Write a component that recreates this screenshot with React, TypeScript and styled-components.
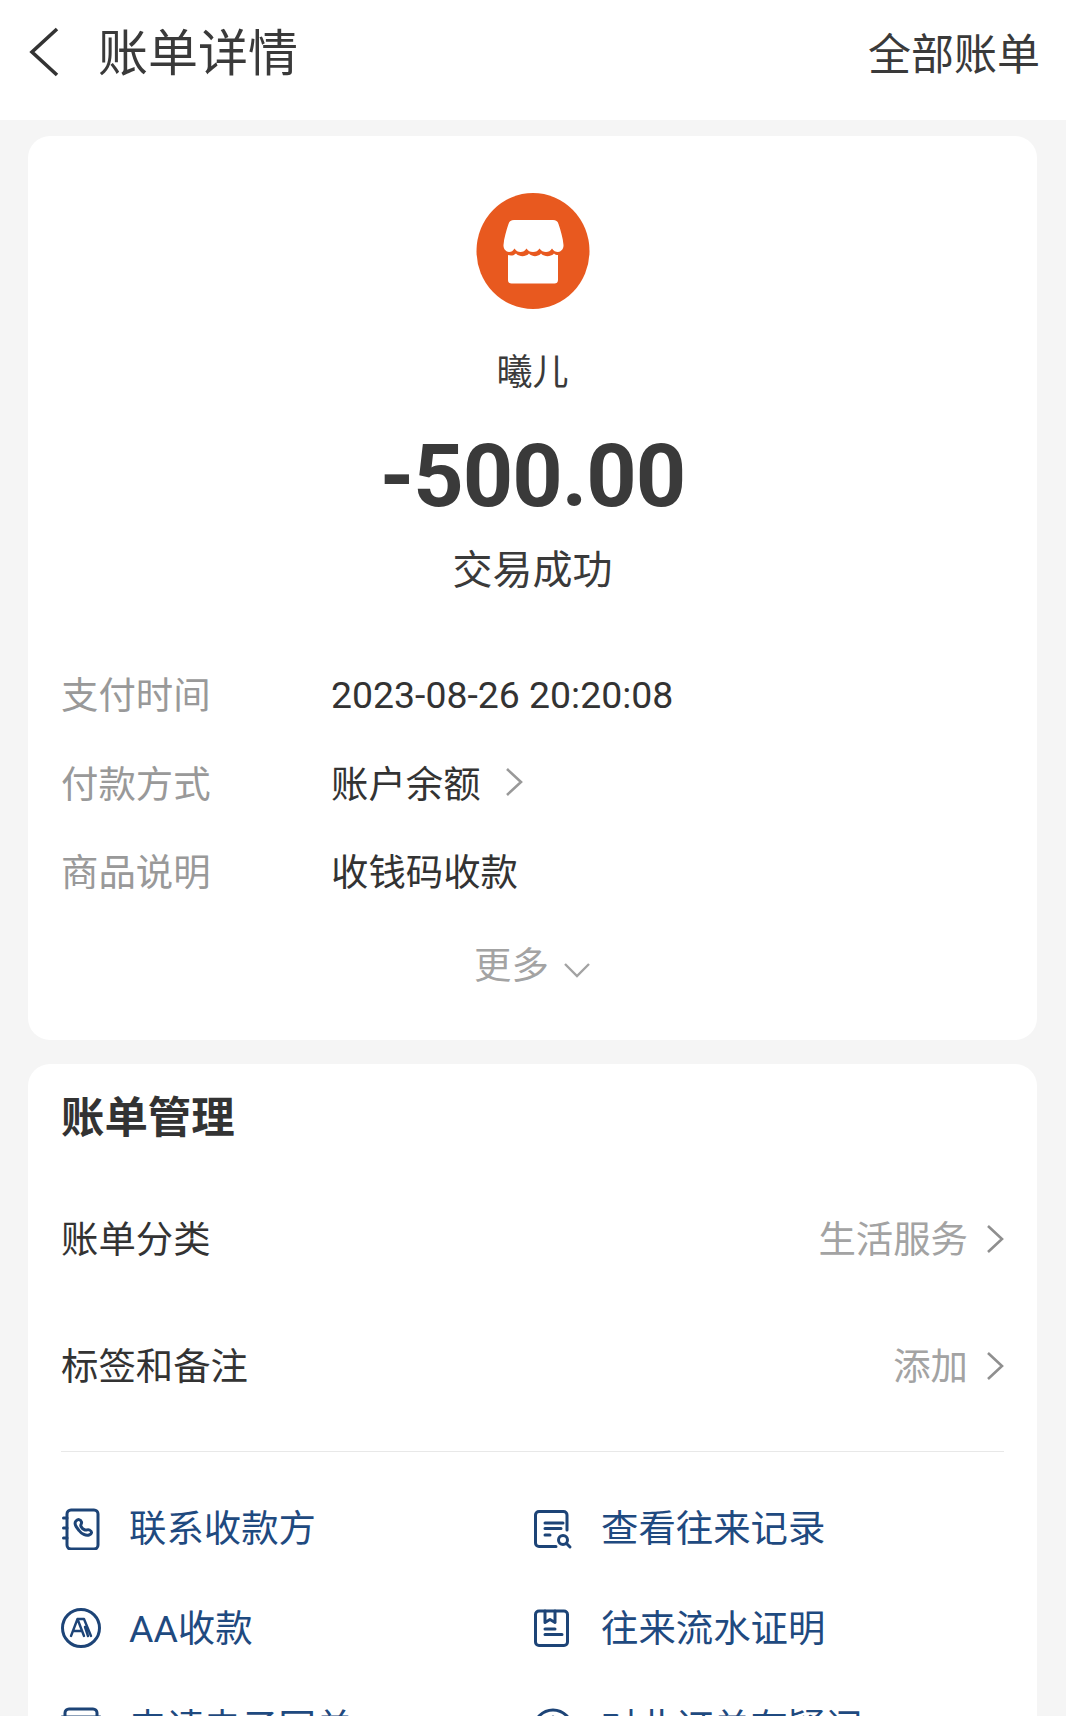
import type { FC, ReactNode } from 'react'
import styled, { createGlobalStyle } from 'styled-components'

const GlobalStyle = createGlobalStyle`
  html, body {
    margin: 0;
    padding: 0;
    height: 100%;
    overflow: hidden;
    background: #f5f5f5;
  }
  * { box-sizing: border-box; }
`

const CJK = `Roboto, "Noto Sans CJK SC", sans-serif`

// ─── Header ────────────────────────────────────────────────────────────────────

const Page = styled.div`
  height: 100vh;
  overflow: hidden;
  background: #f5f5f5;
  font-family: ${CJK};
  color: #333333;
`

const Header = styled.header`
  height: 120px;
  background: #ffffff;
  display: flex;
  align-items: center;
  padding: 0 26px 10px 29px;
`

const BackIcon = styled.svg`
  width: 30px;
  height: 52px;
  margin-bottom: 4px;
  flex: none;
`

const HeaderTitle = styled.h1`
  margin: 0 0 2px 39px;
  font-size: 50px;
  line-height: 60px;
  font-weight: 400;
  color: #3a3a3a;
  flex: 1;
`

const HeaderLink = styled.span`
  font-size: 43px;
  line-height: 60px;
  color: #3a3a3a;
`

// ─── Cards ─────────────────────────────────────────────────────────────────────

const Content = styled.main`
  padding: 16px 29px 0 28px;
  display: flex;
  flex-direction: column;
  gap: 24px;
`

const Card = styled.section`
  background: #ffffff;
  border-radius: 22px;
`

const SummaryCard = styled(Card)`
  height: 904px;
  padding: 57px 33px 0;
  display: flex;
  flex-direction: column;
`

const Merchant = styled.div`
  display: flex;
  flex-direction: column;
  align-items: center;
`

const MerchantLogo = styled.svg`
  width: 114px;
  height: 116px;
`

const MerchantName = styled.div`
  margin-top: 39px;
  font-size: 36px;
  line-height: 50px;
  color: #3a3a3a;
`

const Amount = styled.div`
  margin-top: 26px;
  font-family: Roboto, sans-serif;
  font-size: 88px;
  line-height: 104px;
  font-weight: 700;
  letter-spacing: -1px;
  color: #3a3a3a;
`

const Status = styled.div`
  margin-top: 15px;
  font-size: 40px;
  line-height: 56px;
  color: #3a3a3a;
`

const DetailList = styled.div`
  margin-top: 68px;
  display: flex;
  flex-direction: column;
  gap: 36.5px;
`

const DetailRow = styled.div`
  display: flex;
  align-items: center;
  height: 52px;
`

const DetailLabel = styled.span`
  width: 270px;
  font-size: 37.4px;
  color: #999999;
  flex: none;
`

const DetailValue = styled.span`
  font-size: 37.4px;
  color: #333333;
`

const DateValue = styled(DetailValue)`
  padding-top: 4px;
`

const SmallChevron = styled.svg`
  width: 20px;
  height: 32px;
  margin-left: 23px;
  flex: none;
`

const MoreRow = styled.div`
  margin-top: 44px;
  display: flex;
  justify-content: center;
  align-items: center;
  gap: 14px;
  font-size: 37.4px;
  line-height: 52px;
  color: #a3a3a3;
`

const MoreChevron = styled.svg`
  width: 28px;
  height: 18px;
  margin-top: 8px;
`

const ManageCard = styled(Card)`
  padding: 23px 32px 0 33px;
  height: 800px;
`

const ManageTitle = styled.h2`
  margin: 0;
  font-size: 43.4px;
  line-height: 64px;
  font-weight: 700;
  color: #333333;
`

const ManageRow = styled.div`
  display: flex;
  align-items: center;
  justify-content: space-between;
  height: 127px;
  font-size: 37.4px;
  color: #333333;
`

const FirstManageRow = styled(ManageRow)`
  margin-top: 24px;
`

const ManageText = styled.span`
  padding-bottom: 4px;
`

const ManageValue = styled.span`
  display: flex;
  align-items: center;
  color: #a3a3a3;

  ${SmallChevron} {
    margin-left: 17px;
  }
`

const Divider = styled.hr`
  margin: 22px 1px 0 0;
  border: none;
  border-top: 1px solid #e8e8e8;
`

const LinkGrid = styled.div`
  margin-top: 26px;
  display: grid;
  grid-template-columns: 472px 1fr;
  grid-auto-rows: 99.5px;
`

const LinkItem = styled.div`
  display: flex;
  align-items: center;
  gap: 28px;
  font-size: 37.4px;
  color: #1f4a80;
`

const LinkText = styled.span`
  padding-bottom: 3px;
`

const LinkIcon = styled.svg`
  width: 40px;
  height: 44px;
  flex: none;
  fill: none;
  stroke: #1d4477;
  stroke-width: 3;
  stroke-linecap: round;
  stroke-linejoin: round;
`

// ─── Icons ─────────────────────────────────────────────────────────────────────

const ChevronRight: FC<{ color: string }> = ({ color }) => (
  <SmallChevron viewBox="0 0 20 32" fill="none" stroke={color} strokeWidth="2.6">
    <path d="M3 3l14 13L3 29" />
  </SmallChevron>
)

const ICONS: Record<string, ReactNode> = {
  contact: (
    <>
      <rect x="6" y="4" width="31" height="39" rx="4" />
      <path d="M2.500 12h3.500M2.500 22h3.500M2.500 32h3.500" />
      <path d="M15 15c2-2 4.500-2 5.500 1 .6 2-1.500 2.500-.5 4.500 1 2 2.500 3 4 3.500 2 .5 2.500-1 4.500 0 3 1.500 2.500 4-.5 5-3 1-7.500-1-10-4.500C15 21 13 17 15 15z" />
    </>
  ),
  records: (
    <g transform="translate(1 0)">
      <path d="M33 24V9a3.500 3.500 0 0 0-3.500-3.500H5A3.500 3.500 0 0 0 1.500 9v28A3.500 3.500 0 0 0 5 40.500h17" />
      <path d="M11 17h18M11 22.500h16M11 29h5" />
      <circle cx="29" cy="34" r="4.500" />
      <path d="M32.500 37.500l3.500 3.500" />
    </g>
  ),
  aa: (
    <>
      <circle cx="20" cy="23" r="18.500" />
      <g strokeWidth="2.400">
        <path d="M10 31l6.500-17 6.500 17M12.500 26h8" />
        <path d="M17 14h6l7 17M24 22l3 9" />
      </g>
    </>
  ),
  proof: (
    <g transform="translate(1 0)">
      <rect x="1.500" y="6" width="32" height="34.500" rx="3.500" />
      <path d="M11 6v11.500l5-3 5 3V6" />
      <path d="M11 24h10M11 29.500h17" />
    </g>
  ),
  receipt: (
    <>
      <path d="M4 44V8a4 4 0 0 1 4-4h24a4 4 0 0 1 4 4v36" />
      <path d="M1 12h38" />
    </>
  ),
  help: (
    <>
      <circle cx="20" cy="24" r="19" />
      <path d="M20 12v4" />
    </>
  ),
}

const LINKS = [
  { icon: 'contact', label: '联系收款方' },
  { icon: 'records', label: '查看往来记录' },
  { icon: 'aa', label: 'AA收款' },
  { icon: 'proof', label: '往来流水证明' },
  { icon: 'receipt', label: '申请电子回单' },
  { icon: 'help', label: '对此订单有疑问' },
]

export default function App() {
  return (
    <Page>
      <GlobalStyle />
      <Header>
        <BackIcon viewBox="0 0 30 52" fill="none" stroke="#333333" strokeWidth="3.6">
          <path d="M28 2L3 25l25 23" />
        </BackIcon>
        <HeaderTitle>账单详情</HeaderTitle>
        <HeaderLink>全部账单</HeaderLink>
      </Header>
      <Content>
        <SummaryCard>
          <Merchant>
            <MerchantLogo viewBox="0 0 114 116">
              <ellipse cx="57" cy="58" rx="56.500" ry="58" fill="#e8591f" />
              <path
                d="M37 27h40c3 0 4.500 1 5.500 4 2 6 4.500 14 5 21 .3 4-2.500 7-5.500 7-2.500 0-4.500-1-6-3.500-1.500 2.500-3.500 3.500-6 3.500s-5-1-6.500-3.500c-1.500 2.500-3.500 3.500-6.500 3.500s-5-1-6.500-3.500c-1.500 2.500-3.500 3.500-6 3.500s-4.500-1-6-3.500c-1.500 2.500-3 3.500-5.500 3.500-3 0-5.800-3-5.500-7 .5-7 3-15 5-21 1-3 2.500-4 5.500-4z"
                fill="#ffffff"
              />
              <path
                d="M32 62c3 1 6 .5 8-1.500 3 3.500 10 3.500 13 0 3 3.500 9 3.500 12 0 3 3.500 10 3.500 13 0 1 1 2.500 1.500 4 1.500v25c0 2.500-1.500 3.500-3.500 3.500h-43c-2 0-3.500-1-3.500-3.500z"
                fill="#ffffff"
              />
            </MerchantLogo>
            <MerchantName>曦儿</MerchantName>
            <Amount>-500.00</Amount>
            <Status>交易成功</Status>
          </Merchant>
          <DetailList>
            <DetailRow>
              <DetailLabel>支付时间</DetailLabel>
              <DateValue>2023-08-26 20:20:08</DateValue>
            </DetailRow>
            <DetailRow>
              <DetailLabel>付款方式</DetailLabel>
              <DetailValue>账户余额</DetailValue>
              <ChevronRight color="#999999" />
            </DetailRow>
            <DetailRow>
              <DetailLabel>商品说明</DetailLabel>
              <DetailValue>收钱码收款</DetailValue>
            </DetailRow>
          </DetailList>
          <MoreRow>
            更多
            <MoreChevron viewBox="0 0 28 18" fill="none" stroke="#a3a3a3" strokeWidth="2.4">
              <path d="M2 3l12 12L26 3" />
            </MoreChevron>
          </MoreRow>
        </SummaryCard>
        <ManageCard>
          <ManageTitle>账单管理</ManageTitle>
          <FirstManageRow>
            <ManageText>账单分类</ManageText>
            <ManageValue>
              <ManageText>生活服务</ManageText>
              <ChevronRight color="#8f8f8f" />
            </ManageValue>
          </FirstManageRow>
          <ManageRow>
            <ManageText>标签和备注</ManageText>
            <ManageValue>
              <ManageText>添加</ManageText>
              <ChevronRight color="#8f8f8f" />
            </ManageValue>
          </ManageRow>
          <Divider />
          <LinkGrid>
            {LINKS.map(({ icon, label }) => (
              <LinkItem key={icon}>
                <LinkIcon viewBox="0 0 40 44">{ICONS[icon]}</LinkIcon>
                <LinkText>{label}</LinkText>
              </LinkItem>
            ))}
          </LinkGrid>
        </ManageCard>
      </Content>
    </Page>
  )
}
